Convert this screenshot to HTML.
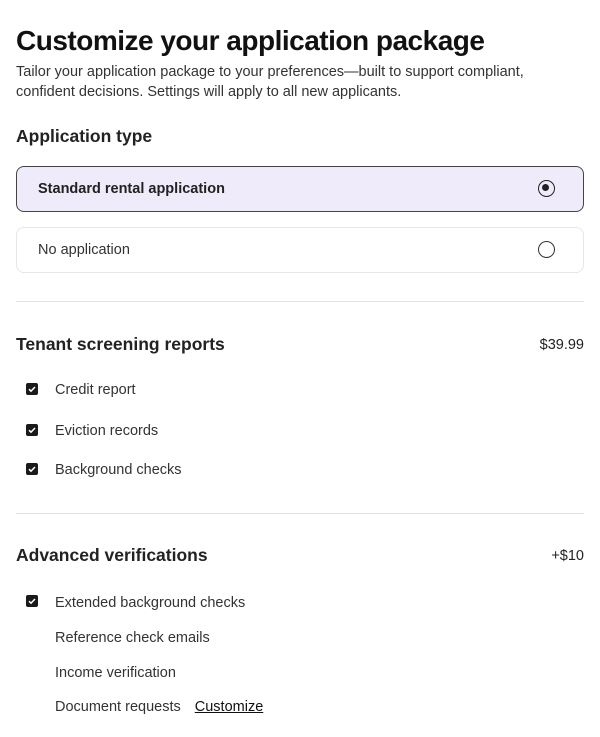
<html><head><style>
body{margin:0;width:600px;height:737px;background:#fff;font-family:"Liberation Sans",sans-serif;color:#1a1a1a;position:relative;overflow:hidden}
.a{position:absolute;white-space:nowrap}
.cb{position:absolute;left:26px;width:12px;height:12px;background:#1a1a1a;border-radius:2px}
.cb svg{position:absolute;left:1px;top:1px}
.it{position:absolute;left:55px;font-size:14.5px;color:#333;transform:translateY(-50%)}
.box{position:absolute;left:16px;width:566px;height:44px;border-radius:8px}
.hr{position:absolute;left:16px;width:568px;height:1px;background:#e3e3e3}
</style></head><body>
<div class="a" style="left:16px;top:25px;font-size:28px;font-weight:bold;letter-spacing:-0.5px;color:#111">Customize your application package</div>
<div class="a" style="left:16px;top:62px;font-size:14.5px;line-height:20px;color:#333">Tailor your application package to your preferences—built to support compliant,<br>confident decisions. Settings will apply to all new applicants.</div>
<div class="a" style="left:16px;top:126px;font-size:17.5px;font-weight:bold;color:#222">Application type</div>
<div class="box" style="top:166px;background:#efebfb;border:1px solid #444"></div>
<div class="a" style="left:38px;top:181px;font-size:14.5px;font-weight:bold;color:#222">Standard rental application</div>
<div class="a" style="left:538px;top:180px;width:17px;height:17px;border:1.8px solid #222;border-radius:50%;box-sizing:border-box"><div style="position:absolute;left:3px;top:3px;width:7.4px;height:7.4px;border-radius:50%;background:#222"></div></div>
<div class="box" style="top:227px;border:1px solid #e6e6e6"></div>
<div class="a" style="left:38px;top:242px;font-size:14.5px;color:#333">No application</div>
<div class="a" style="left:538px;top:241px;width:17px;height:17px;border:1.5px solid #333;border-radius:50%;box-sizing:border-box"></div>
<div class="hr" style="top:301px"></div>
<div class="a" style="left:16px;top:334px;font-size:17.5px;font-weight:bold;color:#222">Tenant screening reports</div>
<div class="a" style="right:16px;top:337px;font-size:14.5px;color:#222">$39.99</div>
<div class="cb" style="top:383px"><svg width="10" height="10" viewBox="0 0 10 10"><path d="M2 5.2 L4 7.2 L8 3" stroke="#fff" stroke-width="1.5" fill="none"/></svg></div>
<div class="it" style="top:390px">Credit report</div>
<div class="cb" style="top:424px"><svg width="10" height="10" viewBox="0 0 10 10"><path d="M2 5.2 L4 7.2 L8 3" stroke="#fff" stroke-width="1.5" fill="none"/></svg></div>
<div class="it" style="top:431px">Eviction records</div>
<div class="cb" style="top:463px"><svg width="10" height="10" viewBox="0 0 10 10"><path d="M2 5.2 L4 7.2 L8 3" stroke="#fff" stroke-width="1.5" fill="none"/></svg></div>
<div class="it" style="top:470px">Background checks</div>
<div class="hr" style="top:513px"></div>
<div class="a" style="left:16px;top:545px;font-size:17.5px;font-weight:bold;color:#222">Advanced verifications</div>
<div class="a" style="right:16px;top:548px;font-size:14.5px;color:#222">+$10</div>
<div class="cb" style="top:595px"><svg width="10" height="10" viewBox="0 0 10 10"><path d="M2 5.2 L4 7.2 L8 3" stroke="#fff" stroke-width="1.5" fill="none"/></svg></div>
<div class="it" style="top:603px">Extended background checks</div>
<div class="it" style="top:638px">Reference check emails</div>
<div class="it" style="top:673px">Income verification</div>
<div class="it" style="top:707px">Document requests <span style="margin-left:10px;text-decoration:underline;color:#111">Customize</span></div>
</body></html>
